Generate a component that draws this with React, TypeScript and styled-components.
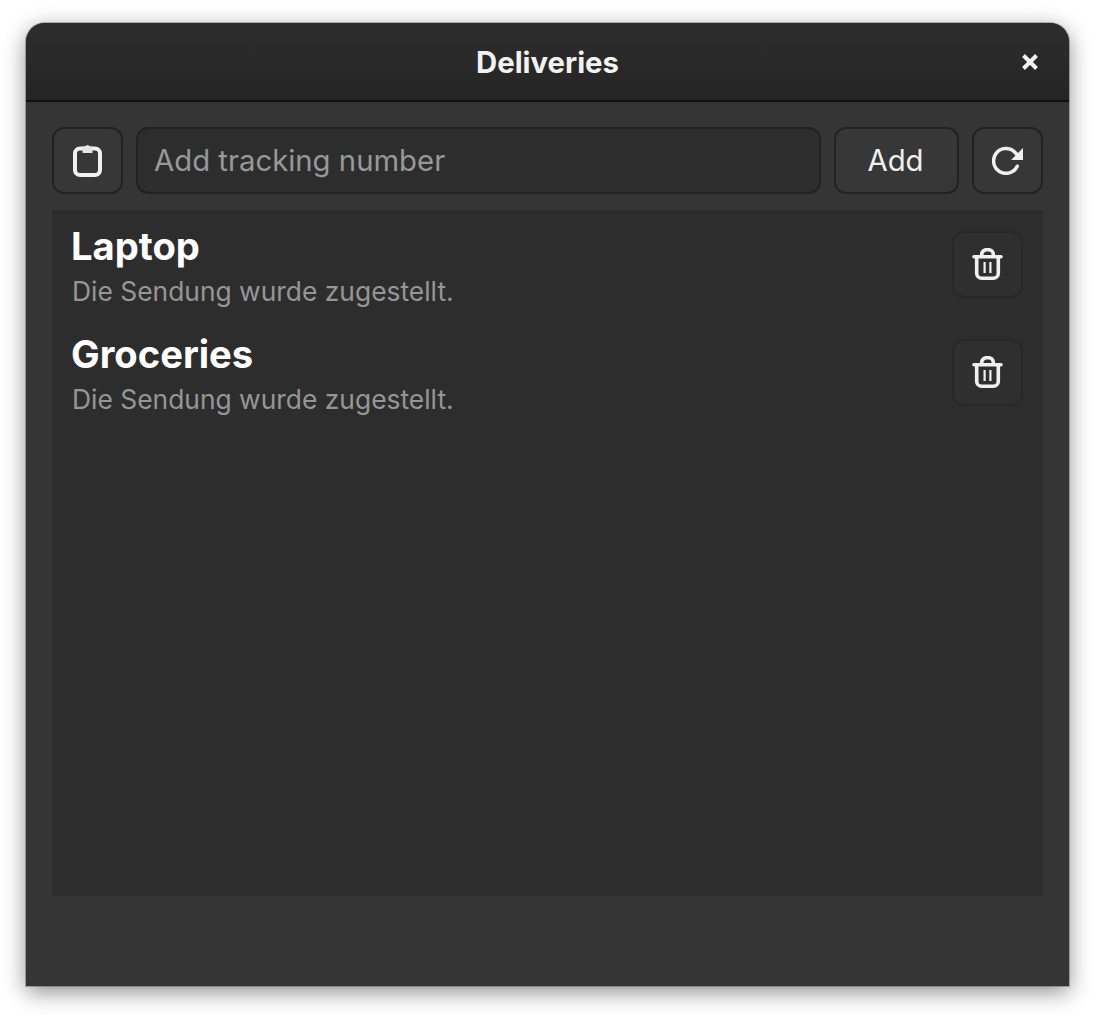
import React from "react";
import styled, { createGlobalStyle } from "styled-components";

const Global = createGlobalStyle`
  html, body { margin: 0; padding: 0; background: #ffffff; }
  body { font-family: Inter, "Liberation Sans", sans-serif; }
  * { box-sizing: border-box; }
`;

const Page = styled.div`
  width: 1096px;
  height: 1018px;
  padding: 23px 27px 32px 26px;
  overflow: hidden;
`;

const Win = styled.div`
  display: flex;
  flex-direction: column;
  height: 963px;
  background: #353535;
  border-radius: 19px 19px 0 0;
  overflow: hidden;
  box-shadow: 0 0 0 1px rgba(0, 0, 0, 0.25), 0 6px 22px rgba(0, 0, 0, 0.45);
`;

const Header = styled.header`
  position: relative;
  flex: none;
  height: 79px;
  display: flex;
  align-items: center;
  justify-content: center;
  background: linear-gradient(#2d2d2d, #252525);
  border-bottom: 2px solid #0f0f0f;
`;

const Title = styled.h1`
  margin: 1px 0 0;
  font-size: 29.3px;
  font-weight: 700;
  color: #f2f2f2;
`;

const Close = styled.button`
  position: absolute;
  right: 27.5px;
  top: 27px;
  width: 24px;
  height: 24px;
  padding: 0;
  border: 0;
  background: none;
  display: flex;
  align-items: center;
  justify-content: center;
`;

const Content = styled.main`
  flex: 1;
  display: flex;
  flex-direction: column;
  gap: 16px;
  padding: 25px 26px 90px;
  min-height: 0;
`;

const Toolbar = styled.div`
  flex: none;
  display: flex;
  gap: 13px;
  height: 67px;
`;

const Btn = styled.button<{ $w: number }>`
  flex: none;
  width: ${(p) => p.$w}px;
  height: 67px;
  padding: 0 2px 0 0;
  display: flex;
  align-items: center;
  justify-content: center;
  background: #373737;
  border: 2px solid #222222;
  border-radius: 12px;
  color: #f0f0f0;
  font-family: inherit;
  font-size: 29.3px;
  font-weight: 400;
`;

const IconBtn = styled(Btn)`
  padding: 0;
`;

const Field = styled.div`
  flex: 1;
  display: flex;
  align-items: center;
  padding: 0 16px;
  background: #2d2d2d;
  border: 2px solid #222222;
  border-radius: 12px;
  font-size: 29.3px;
  color: #989898;
`;

const List = styled.section`
  flex: 1;
  background: #2d2d2d;
  padding: 0 20px;
`;

const Row = styled.div`
  display: flex;
  height: 108px;
  align-items: flex-start;
  justify-content: space-between;
`;

const Info = styled.div`
  display: flex;
  flex-direction: column;
  padding-top: 13px;
`;

const Name = styled.div`
  margin-left: -1px;
  font-size: 38.2px;
  line-height: 46px;
  font-weight: 700;
  color: #ffffff;
`;

const Sub = styled.div`
  font-size: 26.4px;
  line-height: 44px;
  color: #969696;
`;

const Trash = styled.button`
  flex: none;
  width: 71px;
  height: 67px;
  margin-top: 21px;
  padding: 0;
  display: flex;
  align-items: center;
  justify-content: center;
  background: #2f2f2f;
  border: 2px solid #282828;
  border-radius: 12px;
`;

const ClipIcon = () => (
  <svg width="29" height="33" viewBox="0 0 29 33" fill="none">
    <rect x="2" y="4.5" width="25" height="26.5" rx="5" stroke="#f0f0f0" strokeWidth="4" />
    <path d="M9.5 2.5h2.7a2.5 2.5 0 0 1 4.6 0h2.7v6.5h-10z" fill="#e4e4e4" />
  </svg>
);

const RefreshIcon = () => (
  <svg width="31" height="29" viewBox="0 0 31 29" fill="none">
    <path d="M25.2 20.2A12.4 12.4 0 1 1 22.8 6.2L27 10.5" stroke="#f0f0f0" strokeWidth="3.5" strokeLinecap="round" />
    <path d="M31 2v12H19z" fill="#f0f0f0" />
  </svg>
);

const TrashIcon = () => (
  <svg width="31" height="33" viewBox="0 0 31 33" fill="none" stroke="#f0f0f0" strokeWidth="3.6">
    <path d="M2 8.7h27" strokeLinecap="round" />
    <path d="M9.7 8.7V6.5a4.8 4.8 0 0 1 4.8-4.8h2a4.8 4.8 0 0 1 4.8 4.8v2.2" />
    <path d="M4.7 8.7v16.6a5 5 0 0 0 5 5h11.6a5 5 0 0 0 5-5V8.7" />
    <path d="M12.6 14v11M18.4 14v11" strokeWidth="2.2" />
  </svg>
);

const CloseIcon = () => (
  <svg width="18" height="18" viewBox="0 0 18 18" fill="none">
    <path d="M2.5 2.5l13 13M15.5 2.5l-13 13" stroke="#f2f2f2" strokeWidth="4" />
  </svg>
);

const items = ["Laptop", "Groceries"];

export default function App() {
  return (
    <>
      <Global />
      <Page>
        <Win>
          <Header>
            <Title>Deliveries</Title>
            <Close aria-label="Close"><CloseIcon /></Close>
          </Header>
          <Content>
            <Toolbar>
              <IconBtn $w={71}><ClipIcon /></IconBtn>
              <Field>Add tracking number</Field>
              <Btn $w={125}>Add</Btn>
              <IconBtn $w={71}><RefreshIcon /></IconBtn>
            </Toolbar>
            <List>
              {items.map((n) => (
                <Row key={n}>
                  <Info>
                    <Name>{n}</Name>
                    <Sub>Die Sendung wurde zugestellt.</Sub>
                  </Info>
                  <Trash aria-label="Delete"><TrashIcon /></Trash>
                </Row>
              ))}
            </List>
          </Content>
        </Win>
      </Page>
    </>
  );
}
